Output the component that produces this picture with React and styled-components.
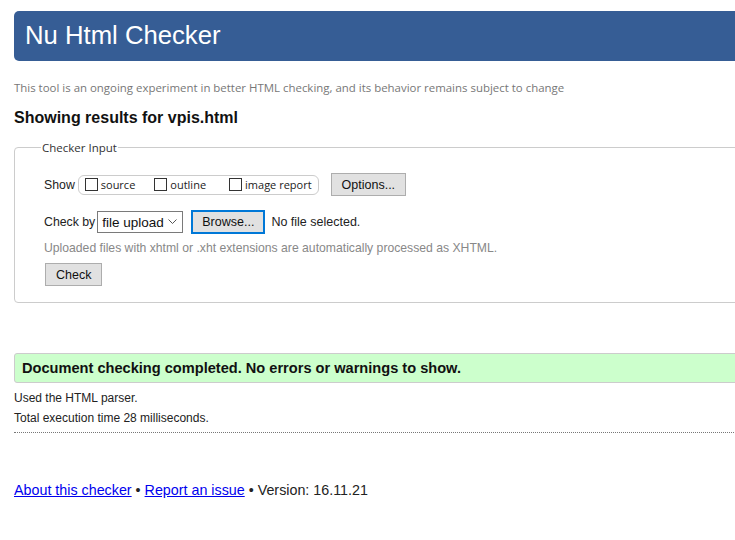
import React from "react"
import styled, { createGlobalStyle } from "styled-components"

const GlobalStyle = createGlobalStyle`
  html, body {
    margin: 0;
    padding: 0;
    overflow: hidden;
    background: #fff;
  }
  body {
    font-family: "Liberation Sans", Arial, sans-serif;
    color: #222;
  }
`

const Page = styled.div`
  width: 760px;
  padding: 11px 0 0 14px;
`

const Banner = styled.header`
  height: 50px;
  background: #365d95;
  border-radius: 5px;
  display: flex;
  align-items: center;
  padding-left: 11px;
`

const Title = styled.h1`
  margin: 0 0 2px;
  font-family: "Liberation Sans", Arial, sans-serif;
  font-weight: 400;
  font-size: 25.7px;
  color: #fff;
`

const Intro = styled.p`
  margin: 19px 0 0;
  font-family: "Open Sans", sans-serif;
  font-size: 11.45px;
  color: #777;
`

const Heading = styled.h2`
  margin: 14px 0 0;
  font-size: 16px;
  font-weight: 700;
  color: #111;
`

const Fieldset = styled.fieldset`
  margin: 13px 0 0;
  padding: 6px 0 16px 29px;
  border: 1px solid #ccc;
  border-radius: 4px;
`

const Legend = styled.legend`
  margin-left: -3px;
  padding: 0 1px;
  font-family: "Open Sans", sans-serif;
  font-size: 11.5px;
  color: #333;
`

const Row = styled.div`
  display: flex;
  align-items: center;
  font-size: 12.3px;
  color: #222;
  margin-top: ${p => p.$top || 0}px;
`

const Pill = styled.div`
  display: flex;
  align-items: center;
  height: 18px;
  margin-left: 3px;
  padding: 0 6px;
  border: 1px solid #ccc;
  border-radius: 6px;
`

const Option = styled.label`
  display: flex;
  align-items: center;
  margin-right: ${p => p.$gap || 0}px;
  font-family: "Open Sans", sans-serif;
  font-size: 11px;
  color: #222;
`

const Box = styled.span`
  width: 11px;
  height: 11px;
  border: 1px solid #333;
  margin-right: 3px;
  background: #fff;
`

const Button = styled.button`
  height: ${p => p.$h || 23}px;
  padding: 0 ${p => p.$pad || 10}px;
  margin-left: ${p => p.$ml || 0}px;
  background: #e1e1e1;
  border: ${p => (p.$focus ? "2px solid #0078d7" : "1px solid #adadad")};
  border-radius: 0;
  font-family: "Liberation Sans", Arial, sans-serif;
  font-size: 12.5px;
  color: #111;
`

const Select = styled.div`
  display: flex;
  align-items: center;
  justify-content: space-between;
  width: 86px;
  height: 22px;
  box-sizing: border-box;
  margin-left: 2px;
  padding: 0 5px 0 4px;
  border: 1px solid #7a7a7a;
  font-size: 13.5px;
  color: #111;
`

const Note = styled.span`
  margin-left: 6px;
  font-size: 12.5px;
  color: #222;
`

const Hint = styled.p`
  margin: 7px 0 0;
  font-size: 12.2px;
  color: #888;
`

const Success = styled.div`
  margin-top: 50px;
  height: 28px;
  display: flex;
  align-items: center;
  padding-left: 7px;
  background: #ccffcc;
  border: 1px solid #ccc;
  border-radius: 3px;
  font-size: 14.6px;
  font-weight: 700;
  color: #111;
`

const Info = styled.p`
  margin: ${p => p.$top || 0}px 0 0;
  font-size: 12px;
  color: #222;
`

const Divider = styled.hr`
  margin: 7px 0 0;
  border: 0;
  border-top: 1px dotted #777;
`

const Footer = styled.p`
  margin: 49px 0 0;
  font-size: 14.3px;
  color: #222;
`

const Link = styled.a`
  color: #0000ee;
  text-decoration: underline;
`

function Chevron() {
  return (
    <svg width="9" height="6" viewBox="0 0 9 6">
      <path d="M0.5 0.5 L4.5 4.5 L8.5 0.5" fill="none" stroke="#555" strokeWidth="1" />
    </svg>
  )
}

export default function App() {
  return (
    <Page>
      <GlobalStyle />
      <Banner>
        <Title>Nu Html Checker</Title>
      </Banner>
      <Intro>This tool is an ongoing experiment in better HTML checking, and its behavior remains subject to change</Intro>
      <Heading>Showing results for vpis.html</Heading>
      <Fieldset>
        <Legend>Checker Input</Legend>
        <Row $top={12}>
          Show
          <Pill>
            <Option $gap={19}><Box />source</Option>
            <Option $gap={23}><Box />outline</Option>
            <Option><Box />image report</Option>
          </Pill>
          <Button $ml={12} $pad={10}>Options...</Button>
        </Row>
        <Row $top={14}>
          Check by
          <Select>file upload <Chevron /></Select>
          <Button $ml={8} $pad={9} $h={24} $focus>Browse...</Button>
          <Note>No file selected.</Note>
        </Row>
        <Hint>Uploaded files with xhtml or .xht extensions are automatically processed as XHTML.</Hint>
        <Row $top={8}>
          <Button $ml={1} $pad={10}>Check</Button>
        </Row>
      </Fieldset>
      <Success>Document checking completed. No errors or warnings to show.</Success>
      <Info $top={8}>Used the HTML parser.</Info>
      <Info $top={6}>Total execution time 28 milliseconds.</Info>
      <Divider />
      <Footer>
        <Link href="#">About this checker</Link> • <Link href="#">Report an issue</Link> • Version: 16.11.21
      </Footer>
    </Page>
  )
}
